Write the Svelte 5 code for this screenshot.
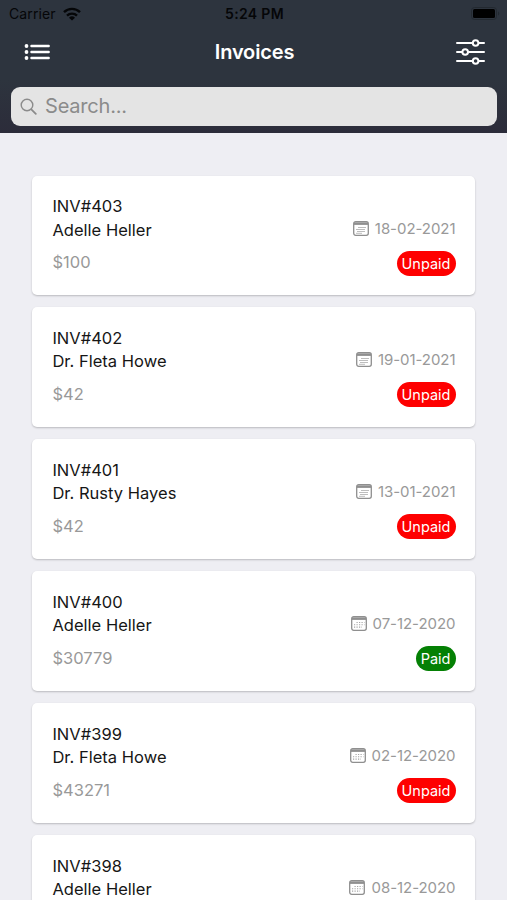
<script>
    let search = '';

    const invoices = [
        { number: 403, client: 'Adelle Heller', amount: 100, date: '18-02-2021', status: 'Unpaid', icon: 'note' },
        { number: 402, client: 'Dr. Fleta Howe', amount: 42, date: '19-01-2021', status: 'Unpaid', icon: 'note' },
        { number: 401, client: 'Dr. Rusty Hayes', amount: 42, date: '13-01-2021', status: 'Unpaid', icon: 'note' },
        { number: 400, client: 'Adelle Heller', amount: 30779, date: '07-12-2020', status: 'Paid', icon: 'month' },
        { number: 399, client: 'Dr. Fleta Howe', amount: 43271, date: '02-12-2020', status: 'Unpaid', icon: 'month' },
        { number: 398, client: 'Adelle Heller', date: '08-12-2020', icon: 'month' }
    ];
</script>

<style>
    :global(body) {
        background-color: #eeeef3;
    }
    .screen {
        height: 900px;
        overflow: hidden;
        font-family: Inter, "Liberation Sans", sans-serif;
        background-color: #eeeef3;
    }
    svg {
        display: block;
        flex: none;
    }
    header {
        box-sizing: border-box;
        height: 133px;
        background: linear-gradient(#2d343e 60%, #2c2c3a);
    }
    .status {
        display: grid;
        grid-template-columns: 1fr auto 1fr;
        align-items: center;
        height: 27px;
        padding: 0 7px 0 9px;
        color: #050608;
        font-size: 14px;
    }
    .carrier {
        display: flex;
        align-items: center;
        gap: 7px;
        letter-spacing: 0.1px;
    }
    .time {
        font-size: 14px;
        font-weight: 600;
        letter-spacing: 0.35px;
    }
    .battery {
        justify-self: end;
    }
    .nav {
        display: grid;
        grid-template-columns: 1fr auto 1fr;
        align-items: center;
        height: 50px;
        padding: 0 21px 0 23px;
        color: white;
    }
    .nav button {
        padding: 0;
        border: 0;
        background: none;
        color: inherit;
        justify-self: start;
    }
    .nav button:last-child {
        justify-self: end;
    }
    h1 {
        margin: 0;
        font-size: 20px;
        font-weight: 600;
        letter-spacing: -0.15px;
    }
    .search {
        display: flex;
        align-items: center;
        box-sizing: border-box;
        height: 39px;
        margin: 9.5px 10px 0 11px;
        padding: 0 9px;
        gap: 8px;
        border-radius: 9px;
        background-color: #e4e4e4;
        color: #8b8b8b;
    }
    .search input {
        flex: 1;
        padding: 0;
        border: 0;
        outline: 0;
        background: none;
        font-family: inherit;
        font-size: 20px;
        letter-spacing: -0.2px;
    }
    .search input::placeholder {
        color: #8b8b8b;
        opacity: 1;
    }
    .list {
        display: flex;
        flex-direction: column;
        gap: 12px;
        padding: 42.6px 32px 0 32.4px;
    }
    .card {
        display: flex;
        justify-content: space-between;
        box-sizing: border-box;
        height: 119.9px;
        flex: none;
        padding: 19.5px 19.5px 0 20px;
        border-radius: 5px;
        background-color: white;
        box-shadow: 0 1px 2px rgba(0, 0, 0, 0.22);
    }
    .card p {
        margin: 0;
        color: #161616;
        font-size: 16.5px;
        line-height: 23.4px;
        letter-spacing: 0.02px;
    }
    .card .amount {
        margin-top: 9.5px;
        color: #999;
    }
    .side {
        display: flex;
        flex-direction: column;
        align-items: flex-end;
        padding-top: 21px;
    }
    .date {
        display: flex;
        align-items: center;
        gap: 6px;
        height: 24px;
        color: #999;
        font-size: 15px;
        letter-spacing: -0.05px;
    }
    .badge {
        box-sizing: border-box;
        height: 25px;
        margin-top: 10.5px;
        padding: 0 5px;
        border-radius: 12.5px;
        background-color: #fe0000;
        color: white;
        font-size: 14.5px;
        line-height: 25px;
    }
    .badge.paid {
        background-color: #048004;
    }
</style>

<div class="screen">
    <header>
        <div class="status">
            <div class="carrier">
                <span>Carrier</span>
                <svg width="18" height="14" viewBox="0 0 18 14" fill="none" stroke="currentColor" stroke-width="2.4">
                    <path d="M1 5.2a11.4 11.4 0 0 1 16 0"/>
                    <path d="M4 8.600a7.200 7.200 0 0 1 10 0"/>
                    <path d="M9 13.600 6 10.700a4.300 4.300 0 0 1 6 0z" fill="currentColor" stroke="none"/>
                </svg>
            </div>
            <span class="time">5:24 PM</span>
            <svg class="battery" width="29" height="13" viewBox="0 0 29 13">
                <rect x="0.5" y="0.5" width="25" height="12" rx="3" fill="none" stroke="#232930"/>
                <rect x="2" y="2" width="22" height="9" rx="1.5" fill="black"/>
                <path d="M27 4.5a2.200 2.200 0 0 1 0 4z" fill="#232930"/>
            </svg>
        </div>
        <div class="nav">
            <button aria-label="Menu">
                <svg width="27" height="18" viewBox="0 0 27 18" fill="currentColor">
                    {#each [3, 9, 15] as y}
                        <circle cx="3.5" cy={y} r="1.9"/>
                        <rect x="7.3" y={y - 1.3} width="19.5" height="2.6" rx="1"/>
                    {/each}
                </svg>
            </button>
            <h1>Invoices</h1>
            <button aria-label="Filters">
                <svg width="31" height="26" viewBox="0 0 31 26" fill="none" stroke="currentColor" stroke-width="2" stroke-linecap="round">
                    <path d="M2 4h15.5M24 4h5M2 13h5M13.5 13H29M2 22h15.5M24 22h5"/>
                    <circle cx="20.6" cy="4" r="2.8"/>
                    <circle cx="10.2" cy="13" r="2.8"/>
                    <circle cx="20.6" cy="22" r="2.8"/>
                </svg>
            </button>
        </div>
        <div class="search">
            <svg width="17" height="17" viewBox="0 0 17 17" fill="none" stroke="currentColor" stroke-width="1.4" stroke-linecap="round">
                <circle cx="7" cy="7" r="5.8"/>
                <path d="m11.3 11.3 4.5 4.5" stroke-width="1.8"/>
            </svg>
            <input type="text" placeholder="Search..." bind:value={search}/>
        </div>
    </header>

    <div class="list">
        {#each invoices as invoice}
            <div class="card">
                <div>
                    <p>INV#{invoice.number}</p>
                    <p>{invoice.client}</p>
                    {#if invoice.amount}
                        <p class="amount">${invoice.amount}</p>
                    {/if}
                </div>
                <div class="side">
                    <div class="date">
                        <svg width="16" height="15" viewBox="0 0 16 15" fill="none" stroke="#8f8f8f">
                            <rect x="0.7" y="0.7" width="14.6" height="13.6" rx="2" stroke-width="1.3"/>
                            <path d="M1 2.6h14" stroke-width="2.6"/>
                            {#if invoice.icon === 'note'}
                                <path d="M5 6.5h8M3 8.5h9M4 10.5h8M3 12.3h6" stroke="#b5b5b5" stroke-width="0.9"/>
                            {:else}
                                <path d="M5.5 6.5h8M3 8.8h10.5M3 11.1h8" stroke="#a5a5a5" stroke-width="1.1" stroke-dasharray="1.2 1.3"/>
                            {/if}
                        </svg>
                        <span>{invoice.date}</span>
                    </div>
                    {#if invoice.status}
                        <span class="badge" class:paid={invoice.status === 'Paid'}>{invoice.status}</span>
                    {/if}
                </div>
            </div>
        {/each}
    </div>
</div>
